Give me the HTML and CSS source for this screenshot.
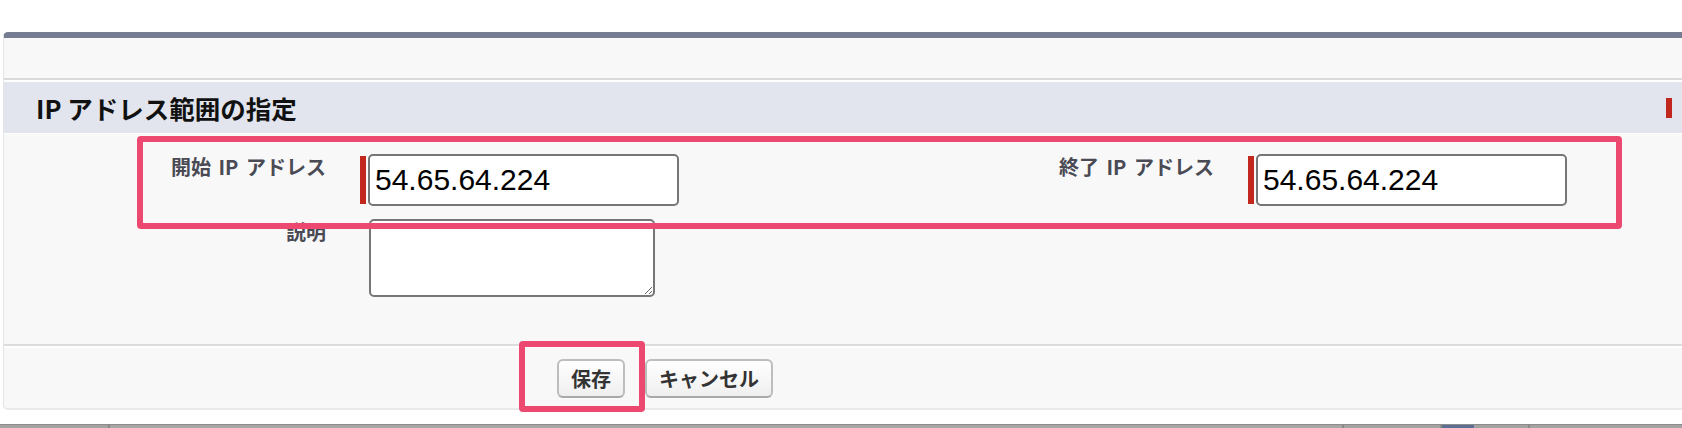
FILE: index.html
```html
<!DOCTYPE html>
<html lang="ja">
<head>
<meta charset="utf-8">
<title>IP アドレス範囲の指定</title>
<link rel="stylesheet" href="styles.css">
</head>
<body>
<div class="page">
  <div class="card">
    <div class="card-top"></div>
    <div class="section-head">
      <h2 class="section-title">IP アドレス範囲の指定</h2>
      <div class="legend"><span class="req-bar"></span></div>
    </div>
    <div class="form-body">
      <div class="form-grid">
        <label class="field-label">開始 IP アドレス</label>
        <div class="field">
          <span class="req-bar req-bar-input"></span>
          <input class="text-input" type="text" value="54.65.64.224">
        </div>
        <label class="field-label">終了 IP アドレス</label>
        <div class="field">
          <span class="req-bar req-bar-input"></span>
          <input class="text-input" type="text" value="54.65.64.224">
        </div>
        <label class="field-label">説明</label>
        <div class="field">
          <textarea class="text-area"></textarea>
        </div>
      </div>
    </div>
    <div class="card-foot">
      <button class="btn" type="button">保存</button>
      <button class="btn" type="button">キャンセル</button>
    </div>
  </div>
  <div class="dock">
    <span class="dock-seg dock-a"></span>
    <span class="dock-seg dock-b"></span>
    <span class="dock-seg dock-c"></span>
    <span class="dock-seg dock-blue"></span>
    <span class="dock-seg dock-d"></span>
  </div>
  <div class="mark mark-fields"></div>
  <div class="mark mark-save"></div>
</div>
</body>
</html>
```
FILE: styles.css
```css
html, body {
  margin: 0;
  padding: 0;
  background: #ffffff;
  overflow: hidden;
}

body {
  font-family: "Noto Sans CJK JP", "Noto Sans", sans-serif;
  color: #111;
}

.page {
  position: relative;
  width: 1682px;
  height: 428px;
  overflow: hidden;
}

.card {
  margin: 32px 0 0 3px;
  width: 1800px;
  background: #f8f8f8;
  border: 1px solid #e4e4e4;
  border-top: 6px solid #767d92;
  border-bottom: 2px solid #e9e9e9;
  border-radius: 5px;
}

.card-top {
  height: 40px;
  border-bottom: 2px solid #dadada;
}

.section-head {
  display: grid;
  grid-template-columns: 1662px auto;
  align-items: center;
  height: 51px;
  background: #e2e5ee;
  border-top: 2px solid #ffffff;
  border-bottom: 1px solid #ffffff;
}

.section-title {
  margin: 0;
  padding-left: 32px;
  font-size: 25.5px;
  line-height: 30px;
  font-weight: 700;
  color: #111;
}

.legend {
  display: flex;
  align-items: center;
}

.req-bar {
  display: block;
  width: 6px;
  height: 20px;
  background: #c1271d;
}

.form-body {
  padding: 20px 0 47px 0;
  border-bottom: 2px solid #dcdcdc;
}

.form-grid {
  display: grid;
  grid-template-columns: 322px 520px 300px 400px;
  column-gap: 34px;
  row-gap: 13px;
}

.field-label {
  text-align: right;
  font-size: 20px;
  line-height: 24px;
  padding-top: 1px;
  font-weight: 700;
  word-spacing: 3px;
  color: #4a4a54;
}

.field {
  display: flex;
  align-items: center;
  gap: 2px;
}

.req-bar-input {
  height: 48px;
  flex: none;
}

.text-input {
  box-sizing: border-box;
  width: 311px;
  height: 52px;
  margin: 0;
  padding: 0 5px;
  border: 2px solid #767676;
  border-radius: 5px;
  background: #ffffff;
  font-family: "Liberation Sans", Arial, sans-serif;
  font-size: 30px;
  color: #000;
  outline: none;
}

.text-area {
  display: block;
  box-sizing: border-box;
  width: 286px;
  height: 78px;
  margin: 0 0 0 9px;
  padding: 4px;
  border: 2px solid #767676;
  border-radius: 5px;
  background: #ffffff;
  font-family: "Liberation Sans", Arial, sans-serif;
  font-size: 16px;
  outline: none;
}

.card-foot {
  display: flex;
  align-items: center;
  gap: 20px;
  height: 60px;
  padding-left: 553px;
  border-top: 2px solid #ffffff;
}

.btn {
  box-sizing: border-box;
  height: 39px;
  margin: 0;
  padding: 0 12px;
  border: 2px solid #bdbdbd;
  border-bottom-color: #a9a9a9;
  border-radius: 6px;
  background: linear-gradient(#ffffff, #efefef);
  font-family: "Noto Sans CJK JP", "Noto Sans", sans-serif;
  font-size: 20px;
  line-height: 25px;
  font-weight: 700;
  color: #333;
}

.dock {
  display: flex;
  margin-top: 14px;
  height: 8px;
  background: #a3a3a3;
  border-top: 1px solid #8c8c8c;
}

.dock-seg {
  display: block;
  height: 100%;
  border-right: 2px solid #8a8a8a;
}

.dock-a { width: 108px; }
.dock-b { width: 1232px; background: #a7a7a7; }
.dock-c { width: 96px; }
.dock-blue { width: 32px; background: #5c6f92; border-right: none; }
.dock-d { width: 54px; }

.mark {
  position: absolute;
  box-sizing: border-box;
  border: 6px solid #ec4870;
  border-radius: 4px;
  pointer-events: none;
}

.mark-fields {
  left: 137px;
  top: 136px;
  width: 1485px;
  height: 93px;
}

.mark-save {
  left: 519px;
  top: 341px;
  width: 126px;
  height: 71px;
}
```
